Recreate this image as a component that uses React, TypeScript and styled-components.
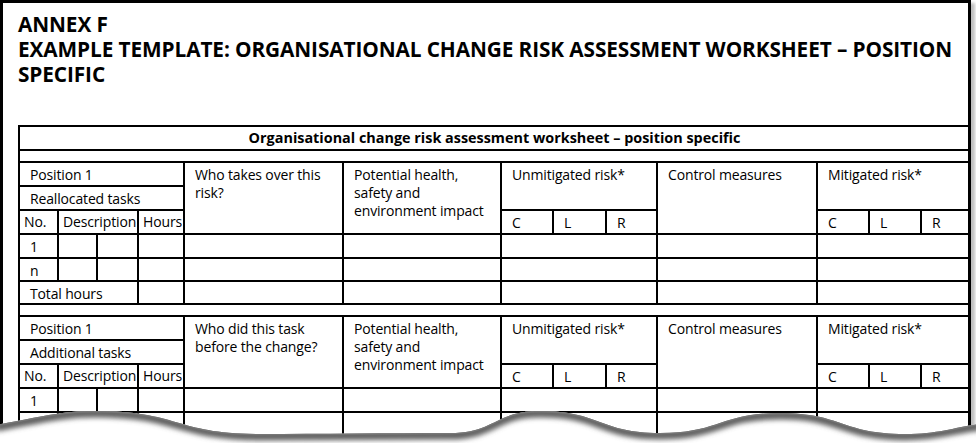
import React from "react";
import styled, { createGlobalStyle } from "styled-components";

const GlobalStyle = createGlobalStyle`
  html, body {
    margin: 0;
    padding: 0;
    background: #fff;
    overflow: hidden;
  }
  body {
    font-family: "Open Sans", "Noto Sans", sans-serif;
    color: #000;
  }
`;

type TaskRow = { no: string };

const COLUMNS = [39, 39, 41, 46, 159, 158, 52, 53, 51, 160, 52, 52, 48];

export default function App() {
  return (
    <Page>
      <GlobalStyle />
      <Frame>
        <Heading>
          <div>ANNEX F</div>
          <div>EXAMPLE TEMPLATE: ORGANISATIONAL CHANGE RISK ASSESSMENT WORKSHEET – POSITION</div>
          <div>SPECIFIC</div>
        </Heading>
        <Sheet>
          <colgroup>
            {COLUMNS.map((w, i) => (
              <Col key={i} $w={w} />
            ))}
          </colgroup>
          <tbody>
            <Row $h={24}>
              <TitleCell colSpan={13}>
                Organisational change risk assessment worksheet – position specific
              </TitleCell>
            </Row>
            <Row $h={12}>
              <Cell colSpan={13} />
            </Row>
            <Section
              tasks="Reallocated tasks"
              who="Who takes over this risk?"
              rows={[{ no: "1" }, { no: "n" }]}
              total
            />
            <Row $h={12}>
              <Cell colSpan={13} />
            </Row>
            <Section
              tasks="Additional tasks"
              who="Who did this task before the change?"
              rows={[{ no: "1" }, { no: "" }, { no: "" }]}
            />
          </tbody>
        </Sheet>
      </Frame>
      <TornEdge viewBox="0 0 976 44" preserveAspectRatio="none">
        <defs>
          <filter id="soft" x="-5%" y="-100%" width="110%" height="300%">
            <feGaussianBlur stdDeviation="2.6" />
          </filter>
          <clipPath id="below">
            <path d={EDGE + " L 980,44 L -4,44 Z"} />
          </clipPath>
        </defs>
        <path d={EDGE + " L 980,44 L -4,44 Z"} fill="#fff" />
        <g clipPath="url(#below)">
          <path d={EDGE} fill="none" stroke="#5e5e5e" strokeWidth="9" filter="url(#soft)" transform="translate(0,2)" />
          <path d={EDGE} fill="none" stroke="#777" strokeWidth="2.5" />
        </g>
      </TornEdge>
    </Page>
  );
}

const EDGE =
  "M -4,26 C 40,18 60,12 95,12 C 180,12 175,35 260,35 C 320,35 390,34 450,34 C 495,34 495,12 540,12 C 600,12 600,34 660,34 C 720,34 720,14 780,14 C 842,14 842,35 905,35 C 940,35 955,28 980,25";

function Section({
  tasks,
  who,
  rows,
  total
}: {
  tasks: string;
  who: string;
  rows: TaskRow[];
  total?: boolean;
}) {
  return (
    <>
      <Row $h={24}>
        <Cell colSpan={4}>Position 1</Cell>
        <Cell rowSpan={3}>{who}</Cell>
        <Cell rowSpan={3}>Potential health, safety and environment impact</Cell>
        <Cell colSpan={3} rowSpan={2}>Unmitigated risk*</Cell>
        <Cell rowSpan={3}>Control measures</Cell>
        <Cell colSpan={3} rowSpan={2}>Mitigated risk*</Cell>
      </Row>
      <Row $h={24}>
        <Cell colSpan={4}>{tasks}</Cell>
      </Row>
      <Row $h={24}>
        <Cell $tight>No.</Cell>
        <Cell $tight colSpan={2}>Description</Cell>
        <Cell $tight>Hours</Cell>
        <Cell $middle>C</Cell>
        <Cell $middle>L</Cell>
        <Cell $middle>R</Cell>
        <Cell $middle>C</Cell>
        <Cell $middle>L</Cell>
        <Cell $middle>R</Cell>
      </Row>
      {rows.map((r, i) => (
        <Row key={i} $h={i % 2 ? 23 : 24}>
          <Cell>{r.no}</Cell>
          <Cell />
          <Cell />
          <Cell />
          <Cell />
          <Cell />
          <Cell colSpan={3} />
          <Cell />
          <Cell colSpan={3} />
        </Row>
      ))}
      {total && (
        <Row $h={23}>
          <Cell colSpan={3}>Total hours</Cell>
          <Cell />
          <Cell />
          <Cell />
          <Cell colSpan={3} />
          <Cell />
          <Cell colSpan={3} />
        </Row>
      )}
    </>
  );
}

const Page = styled.div`
  position: relative;
  width: 976px;
  height: 443px;
  overflow: hidden;
  background: #fff;
`;

const Frame = styled.div`
  width: 971px;
  height: 460px;
  box-sizing: border-box;
  border: 3px solid #000;
  border-bottom: none;
  padding: 9px 0 0 15px;
  background: #fff;
  box-shadow: 4px 3px 3px rgba(0, 0, 0, 0.25);
`;

const Heading = styled.h1`
  margin: 0;
  font-size: 20.8px;
  line-height: 25px;
  font-weight: 700;
  letter-spacing: -0.1px;
  white-space: nowrap;
`;

const Sheet = styled.table`
  width: 950px;
  margin-top: 38px;
  table-layout: fixed;
  border-collapse: collapse;
  border: 2px solid #000;
  border-right-style: hidden;
  font-size: 14px;
  line-height: 18px;
  letter-spacing: -0.15px;
`;

const Col = styled.col<{ $w: number }>`
  width: ${p => p.$w}px;
`;

const Row = styled.tr<{ $h: number }>`
  height: ${p => p.$h}px;
`;

const Cell = styled.td<{ $tight?: boolean; $middle?: boolean }>`
  border: 2px solid #000;
  padding: ${p => (p.$tight ? "2px 2px 0 4px" : p.$middle ? "1px 10px 0" : "3px 10px 0")};
  vertical-align: ${p => (p.$middle ? "middle" : "top")};
  white-space: ${p => (p.$tight ? "nowrap" : "normal")};
  overflow: visible;
`;

const TitleCell = styled.td`
  border: 2px solid #000;
  padding: 0;
  text-align: center;
  vertical-align: middle;
  font-size: 14.4px;
  font-weight: 700;
  letter-spacing: 0;
`;

const TornEdge = styled.svg`
  position: absolute;
  left: 0;
  bottom: 0;
  width: 976px;
  height: 44px;
  display: block;
`;
